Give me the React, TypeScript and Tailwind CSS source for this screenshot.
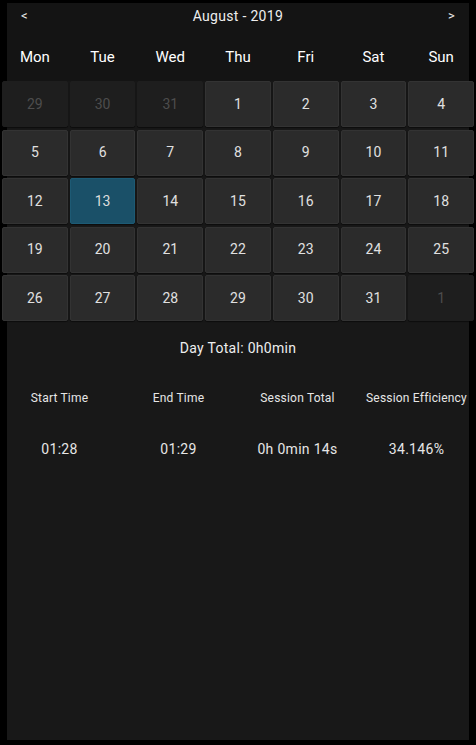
import React from 'react';

interface DayCell {
  day: number;
  current: boolean;
}

const weekdays = ['Mon', 'Tue', 'Wed', 'Thu', 'Fri', 'Sat', 'Sun'];

const buildDays = (): DayCell[] => {
  const days: DayCell[] = [29, 30, 31].map((d) => ({ day: d, current: false }));
  for (let d = 1; d <= 31; d++) days.push({ day: d, current: true });
  days.push({ day: 1, current: false });
  return days;
};

const sessions = [
  { start: '01:28', end: '01:29', total: '0h 0min 14s', efficiency: '34.146%' },
];

const App: React.FC = () => {
  const days = buildDays();
  const selected = 13;

  return (
    <div
      className="w-[476px] h-[745px] bg-black overflow-hidden pt-[3px]"
      style={{ fontFamily: 'Roboto, "Noto Sans", sans-serif' }}
    >
      <div className="mx-[7px] h-[737px] bg-[#181818] flex flex-col">
        {/* Header */}
        <div className="bg-[#141414]">
          <div className="flex items-center justify-between h-[26px] px-[14px] text-[#eeeeee] text-[14px] tracking-[0.3px]">
            <span className="text-[13px]">&lt;</span>
            <span>August - 2019</span>
            <span className="text-[13px]">&gt;</span>
          </div>
          <div className="-mx-[5px] grid grid-cols-7 gap-x-[2px] h-[52px] pt-[4px] items-center text-[15px] text-white">
            {weekdays.map((w) => (
              <div key={w} className="text-center">
                {w}
              </div>
            ))}
          </div>
        </div>

        {/* Days grid */}
        <div className="-mx-[5px] grid grid-cols-7 gap-x-[2px] gap-y-[2.5px]">
          {days.map((c, i) => {
            const isSel = c.current && c.day === selected;
            let cls = 'bg-[#2b2b2b] border-[#333333] text-[#e0e0e0]';
            if (!c.current) cls = 'bg-[#1e1e1e] border-[#1e1e1e] text-[#4d4d4d]';
            if (isSel) cls = 'bg-[#1a5068] border-[#1d5a74] text-[#dddddd]';
            return (
              <div
                key={i}
                className={`h-[46px] flex items-center justify-center rounded-[2px] border text-[14px] shadow-[0_1px_1px_rgba(0,0,0,0.5)] ${cls}`}
              >
                {c.day}
              </div>
            );
          })}
        </div>

        {/* Day total */}
        <div className="mt-[17px] text-center text-[14px] text-[#eeeeee] tracking-[0.3px]">Day Total: 0h0min</div>

        {/* Sessions table */}
        <div className="-mx-[7px] mt-[30px] grid grid-cols-4 text-center text-[12px] text-[#e6e6e6] tracking-[0.2px]">
          <div>Start Time</div>
          <div>End Time</div>
          <div>Session Total</div>
          <div>Session Efficiency</div>
        </div>
        {sessions.map((s, i) => (
          <div
            key={i}
            className="-mx-[7px] mt-[32px] grid grid-cols-4 text-center text-[14px] text-[#e6e6e6] tracking-[0.3px]"
          >
            <div>{s.start}</div>
            <div>{s.end}</div>
            <div>{s.total}</div>
            <div>{s.efficiency}</div>
          </div>
        ))}
      </div>
    </div>
  );
};

export default App;
